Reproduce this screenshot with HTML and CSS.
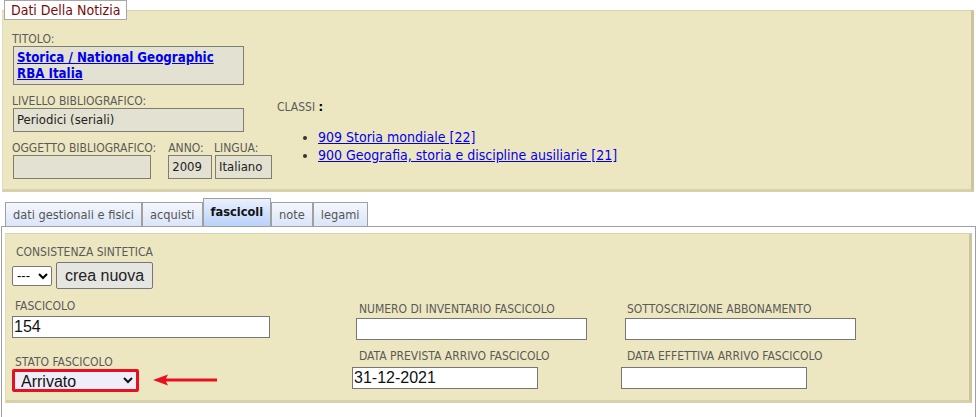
FILE: index.html
```html
<!DOCTYPE html>
<html lang="it">
<head>
  <meta charset="UTF-8">
  <meta name="viewport" content="width=device-width, initial-scale=1.0">
  <link rel="stylesheet" href="styles.css">
  <title>Dati Della Notizia</title>
</head>
<body>
  <fieldset class="notizia">
    <legend>Dati Della Notizia</legend>
    <div class="notizia-body">
      <div class="col-left">
        <div class="lbl">TITOLO:</div>
        <div class="box box-titolo"><a href="#">Storica / National Geographic<br>RBA Italia</a></div>
        <div class="lbl lbl-gap">LIVELLO BIBLIOGRAFICO:</div>
        <div class="box">Periodici (seriali)</div>
        <div class="row3">
          <div class="cell-ogg">
            <div class="lbl">OGGETTO BIBLIOGRAFICO:</div>
            <div class="box box-ogg"></div>
          </div>
          <div class="cell-anno">
            <div class="lbl">ANNO:</div>
            <div class="box box-anno">2009</div>
          </div>
          <div class="cell-lingua">
            <div class="lbl">LINGUA:</div>
            <div class="box box-lingua">Italiano</div>
          </div>
        </div>
      </div>
      <div class="col-right">
        <div class="lbl">CLASSI <b>:</b></div>
        <ul class="classi">
          <li><a href="#">909 Storia mondiale [22]</a></li>
          <li><a href="#">900 Geografia, storia e discipline ausiliarie [21]</a></li>
        </ul>
      </div>
    </div>
  </fieldset>

  <div class="tabs">
    <span class="tab">dati gestionali e fisici</span>
    <span class="tab">acquisti</span>
    <span class="tab active">fascicoli</span>
    <span class="tab">note</span>
    <span class="tab">legami</span>
  </div>
  <div class="tab-panel">
    <div class="fasc">
      <div class="cell-cons">
        <div class="lbl">CONSISTENZA SINTETICA</div>
        <div class="cons-row">
          <select class="sel-small"><option>---</option></select>
          <button class="btn">crea nuova</button>
        </div>
      </div>

      <div class="cell c1 rb">
        <div class="lbl">FASCICOLO</div>
        <input class="inp w-fasc" type="text" value="154">
      </div>
      <div class="cell c2 rb2">
        <div class="lbl ind">NUMERO DI INVENTARIO FASCICOLO</div>
        <input class="inp w-num ind" type="text">
      </div>
      <div class="cell c3 rb2">
        <div class="lbl ind3">SOTTOSCRIZIONE ABBONAMENTO</div>
        <input class="inp w-num ind" type="text">
      </div>

      <div class="cell c1 rc">
        <div class="lbl">STATO FASCICOLO</div>
        <div class="stato-row">
          <select class="sel-stato"><option>Arrivato</option></select>
          <svg class="freccia" width="68" height="16" viewBox="0 0 68 16">
            <path d="M2 8 L17 2.5 L15 6.6 L66 6.4 L66 9.6 L15 9.4 L17 13.5 Z" fill="#e8101e"/>
          </svg>
        </div>
      </div>
      <div class="cell c2 rc2">
        <div class="lbl ind">DATA PREVISTA ARRIVO FASCICOLO</div>
        <input class="inp w-data" type="text" value="31-12-2021">
      </div>
      <div class="cell c3 rc2">
        <div class="lbl ind3">DATA EFFETTIVA ARRIVO FASCICOLO</div>
        <input class="inp w-data" type="text">
      </div>
    </div>
  </div>
</body>
</html>
```

FILE: styles.css
```css
* {
  box-sizing: border-box;
}

body {
  margin: 0;
  font-family: "DejaVu Sans Condensed", "DejaVu Sans", sans-serif;
  color: #333;
  background: #fff;
}

.lbl {
  font-size: 12px;
  line-height: 14px;
  color: #5a5a5a;
  white-space: nowrap;
}

/* pannello dati notizia */
.notizia {
  margin: 0 2px;
  padding: 0 0 10px 0;
  width: 972px;
  background: #ede7c1;
  border-style: solid;
  border-width: 1px 3px 3px 1px;
  border-color: #d8d2ae #cac4a0 #d6d0ab #e2dcb8;
}

.notizia legend {
  margin-left: 1px;
  padding: 0 6px;
  height: 20px;
  line-height: 19px;
  font-size: 14px;
  color: #7a0a0a;
  background: #fff;
  border: 1px solid #a6a6a6;
}

.notizia-body {
  display: grid;
  grid-template-columns: 260px 1fr;
  column-gap: 5px;
  padding: 12px 0 0 9px;
}

.box {
  margin-left: 1px;
  height: 24px;
  padding: 3px 3px;
  font-size: 13px;
  line-height: 16px;
  color: #222;
  background: #e3e1d1;
  border: 1px solid #7e7e6e;
  white-space: nowrap;
}

.box-titolo {
  height: 39px;
  width: 231px;
  padding: 3px 3px;
}

.box-titolo a {
  font-weight: bold;
  font-size: 13.2px;
  color: #0000ee;
}

.lbl-gap {
  margin-top: 9px;
}

.col-left > .box {
  width: 231px;
}

.row3 {
  display: flex;
  margin-top: 9px;
}

.cell-ogg {
  width: 157px;
}

.box-ogg {
  width: 138px;
}

.cell-anno {
  width: 46px;
}

.box-anno {
  width: 44px;
  margin-left: 0;
}

.box-lingua {
  width: 57px;
}

.col-right {
  padding-top: 68px;
}

.col-right b {
  color: #000;
  font-size: 13px;
}

.classi {
  margin: 14px 0 0 0;
  padding-left: 41px;
  font-size: 14px;
  line-height: 18px;
}

.classi a {
  color: #0000ee;
}

/* linguette */
.tabs {
  display: flex;
  align-items: flex-end;
  margin: 6px 0 0 5px;
}

.tab {
  height: 24px;
  padding: 0 7px;
  font-size: 12.7px;
  line-height: 23px;
  color: #555;
  background: linear-gradient(#f4f7fd, #dae5f9);
  border: 1px solid #a0a0a0;
  border-bottom: none;
}

.tab.active {
  height: 28px;
  line-height: 26px;
  font-weight: bold;
  color: #111;
  background: linear-gradient(#eaf1fd, #b8d2fb);
}

.tab-panel {
  margin-left: 1px;
  width: 975px;
  padding: 6px 3px 14px 3px;
  border: 1px solid #a0a0a0;
}

.fasc {
  display: grid;
  grid-template-columns: 340px 269px 1fr;
  padding: 11px 0 8px 6px;
  background: #ede7c1;
  border-style: solid;
  border-width: 1px 3px 3px 1px;
  border-color: #d8d2ae #cac4a0 #d6d0ab #e2dcb8;
  height: 170px;
}

.cell-cons {
  grid-column: 1 / 4;
  padding-left: 4px;
}

.cons-row {
  display: flex;
  align-items: center;
  margin: 3px 0 0 -4px;
}

.sel-small {
  width: 40px;
  height: 20px;
  font-family: "Liberation Sans", Arial, sans-serif;
  font-size: 13px;
  padding: 0;
  background: #fff;
  border: 1px solid #767676;
  border-radius: 2px;
}

.btn {
  margin-left: 4px;
  width: 97px;
  height: 27px;
  font-family: "Liberation Sans", Arial, sans-serif;
  font-size: 16px;
  color: #222;
  background: #e5e5e1;
  border: 1px solid #767676;
  border-radius: 2px;
}

.cell .lbl {
  padding-left: 3px;
}

.cell .ind {
  margin-left: 4px;
}

.cell .ind3 {
  margin-left: 3px;
}

.rb {
  margin-top: 10px;
}

.rb .inp {
  margin-top: 3px;
}

.rb2 {
  margin-top: 13px;
}

.rb2 .inp {
  margin-top: 2px;
}

.rc {
  margin-top: 14px;
}

.rc2 {
  margin-top: 8px;
}

.rc2 .inp {
  margin-top: 4px;
}

.inp {
  display: block;
  height: 22px;
  padding: 0 1px;
  font-family: "Liberation Sans", Arial, sans-serif;
  font-size: 16px;
  color: #111;
  background: #fff;
  border: 1px solid #767676;
}

.w-fasc {
  width: 258px;
}

.w-num {
  width: 231px;
}

.w-data {
  width: 186px;
}

.stato-row {
  display: flex;
  align-items: center;
}

.sel-stato {
  width: 127px;
  height: 23px;
  padding: 0 0 0 2px;
  font-family: "Liberation Sans", Arial, sans-serif;
  font-size: 16px;
  color: #111;
  background: #eeedf9;
  border: 3px solid #e8101e;
  border-radius: 2px;
}

.freccia {
  margin-left: 12px;
}
```
